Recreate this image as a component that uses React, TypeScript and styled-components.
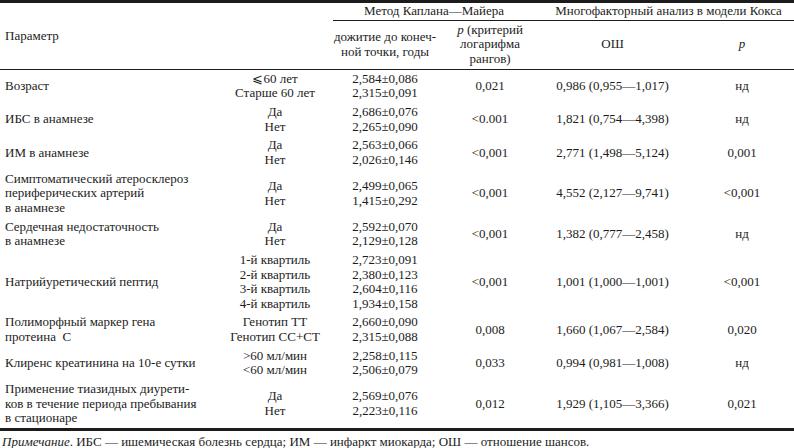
import styled, { createGlobalStyle } from "styled-components";

const GlobalStyle = createGlobalStyle`
  html, body {
    margin: 0;
    padding: 0;
    background: #fff;
  }
  body, table, th, td {
    font-family: "Liberation Serif", "Times New Roman", serif;
    font-size: 13px;
    line-height: 14.5px;
    color: #1c1c1c;
  }
`;

interface Row {
  param: string[];
  groups: string[];
  survival: string[];
  p: string;
  or: string;
  pCox: string;
}

const rows: Row[] = [
  {
    param: ["Возраст"],
    groups: ["⩽60 лет", "Старше 60 лет"],
    survival: ["2,584±0,086", "2,315±0,091"],
    p: "0,021",
    or: "0,986 (0,955—1,017)",
    pCox: "нд",
  },
  {
    param: ["ИБС в анамнезе"],
    groups: ["Да", "Нет"],
    survival: ["2,686±0,076", "2,265±0,090"],
    p: "<0.001",
    or: "1,821 (0,754—4,398)",
    pCox: "нд",
  },
  {
    param: ["ИМ в анамнезе"],
    groups: ["Да", "Нет"],
    survival: ["2,563±0,066", "2,026±0,146"],
    p: "<0,001",
    or: "2,771 (1,498—5,124)",
    pCox: "0,001",
  },
  {
    param: ["Симптоматический атеросклероз", "периферических артерий", "в анамнезе"],
    groups: ["Да", "Нет"],
    survival: ["2,499±0,065", "1,415±0,292"],
    p: "<0,001",
    or: "4,552 (2,127—9,741)",
    pCox: "<0,001",
  },
  {
    param: ["Сердечная недостаточность", "в анамнезе"],
    groups: ["Да", "Нет"],
    survival: ["2,592±0,070", "2,129±0,128"],
    p: "<0,001",
    or: "1,382 (0,777—2,458)",
    pCox: "нд",
  },
  {
    param: ["Натрийуретический пептид"],
    groups: ["1-й квартиль", "2-й квартиль", "3-й квартиль", "4-й квартиль"],
    survival: ["2,723±0,091", "2,380±0,123", "2,604±0,116", "1,934±0,158"],
    p: "<0,001",
    or: "1,001 (1,000—1,001)",
    pCox: "<0,001",
  },
  {
    param: ["Полиморфный маркер гена", "протеина\u00a0\u00a0С"],
    groups: ["Генотип ТТ", "Генотип СС+СТ"],
    survival: ["2,660±0,090", "2,315±0,088"],
    p: "0,008",
    or: "1,660 (1,067—2,584)",
    pCox: "0,020",
  },
  {
    param: ["Клиренс креатинина на 10-е сутки"],
    groups: [">60 мл/мин", "<60 мл/мин"],
    survival: ["2,258±0,115", "2,506±0,079"],
    p: "0,033",
    or: "0,994 (0,981—1,008)",
    pCox: "нд",
  },
  {
    param: ["Применение тиазидных диурети-", "ков в течение периода пребывания", "в стационаре"],
    groups: ["Да", "Нет"],
    survival: ["2,569±0,076", "2,223±0,116"],
    p: "0,012",
    or: "1,929 (1,105—3,366)",
    pCox: "0,021",
  },
];

const App = () => {
  return (
    <>
      <GlobalStyle />
      <Sheet>
        <Table>
          <colgroup>
            <col style={{ width: 225 }} />
            <col style={{ width: 100 }} />
            <col style={{ width: 120 }} />
            <col style={{ width: 90 }} />
            <col style={{ width: 155 }} />
            <col style={{ width: 104 }} />
          </colgroup>
          <thead>
            <tr>
              <ParamHead rowSpan={2} colSpan={2}>
                Параметр
              </ParamHead>
              <GroupHead colSpan={2}>
                <GroupTitle $inset={8}>Метод Каплана—Майера</GroupTitle>
              </GroupHead>
              <GroupHead colSpan={2}>
                <GroupTitle $inset={0} $shift={8}>
                  Многофакторный анализ в модели Кокса
                </GroupTitle>
              </GroupHead>
            </tr>
            <tr>
              <SubHead>
                дожитие до конеч-
                <br />
                ной точки, годы
              </SubHead>
              <SubHead>
                <Italic>p</Italic> (критерий
                <br />
                логарифма
                <br />
                рангов)
              </SubHead>
              <SubHead>ОШ</SubHead>
              <SubHead>
                <Italic>p</Italic>
              </SubHead>
            </tr>
          </thead>
          <tbody>
            {rows.map((row) => (
              <tr key={row.param[0]}>
                <ParamCell>
                  {row.param.map((line) => (
                    <Line key={line}>{line}</Line>
                  ))}
                </ParamCell>
                <Cell>
                  {row.groups.map((g) => (
                    <Line key={g}>{g}</Line>
                  ))}
                </Cell>
                <Cell>
                  {row.survival.map((s, i) => (
                    <Line key={i}>{s}</Line>
                  ))}
                </Cell>
                <Cell>{row.p}</Cell>
                <Cell>{row.or}</Cell>
                <Cell>{row.pCox}</Cell>
              </tr>
            ))}
          </tbody>
        </Table>
        <Note>
          <Italic>Примечание</Italic>. ИБС — ишемическая болезнь сердца; ИМ —
          инфаркт миокарда; ОШ — отношение шансов.
        </Note>
      </Sheet>
    </>
  );
};

const Sheet = styled.div`
  width: 794px;
  height: 448px;
  overflow: hidden;
`;

const Table = styled.table`
  width: 794px;
  table-layout: fixed;
  border-collapse: collapse;
  border-top: 3px solid #1c1c1c;
  border-bottom: 3px solid #1c1c1c;

  thead tr:last-child th {
    border-bottom: 1px solid #1c1c1c;
  }
`;

const ParamHead = styled.th`
  text-align: left;
  font-weight: normal;
  vertical-align: middle;
  padding: 0 5px;
  border-bottom: 1px solid #1c1c1c;
`;

const GroupHead = styled.th`
  font-weight: normal;
  padding: 0;
  height: 17px;
  vertical-align: top;
`;

const GroupTitle = styled.div<{ $inset: number; $shift?: number }>`
  margin-left: ${(p) => p.$inset}px;
  padding: 1px 0 1px ${(p) => p.$shift ?? 0}px;
  border-bottom: 1px solid #1c1c1c;
  text-align: center;
  white-space: nowrap;
`;

const SubHead = styled.th`
  font-weight: normal;
  text-align: center;
  vertical-align: middle;
  padding: 2px 0;
  height: 44px;
`;

const Italic = styled.i`
  font-style: italic;
`;

const Cell = styled.td`
  text-align: center;
  vertical-align: middle;
  padding: 2.2px 0;
  white-space: nowrap;
`;

const ParamCell = styled(Cell)`
  text-align: left;
  padding-left: 5px;
`;

const Line = styled.div`
  line-height: 14.5px;
`;

const Note = styled.div`
  padding: 4px 2px 0;
  white-space: nowrap;
  font-family: "Liberation Serif", "Times New Roman", serif;
  font-size: 13px;
`;

export default App;
